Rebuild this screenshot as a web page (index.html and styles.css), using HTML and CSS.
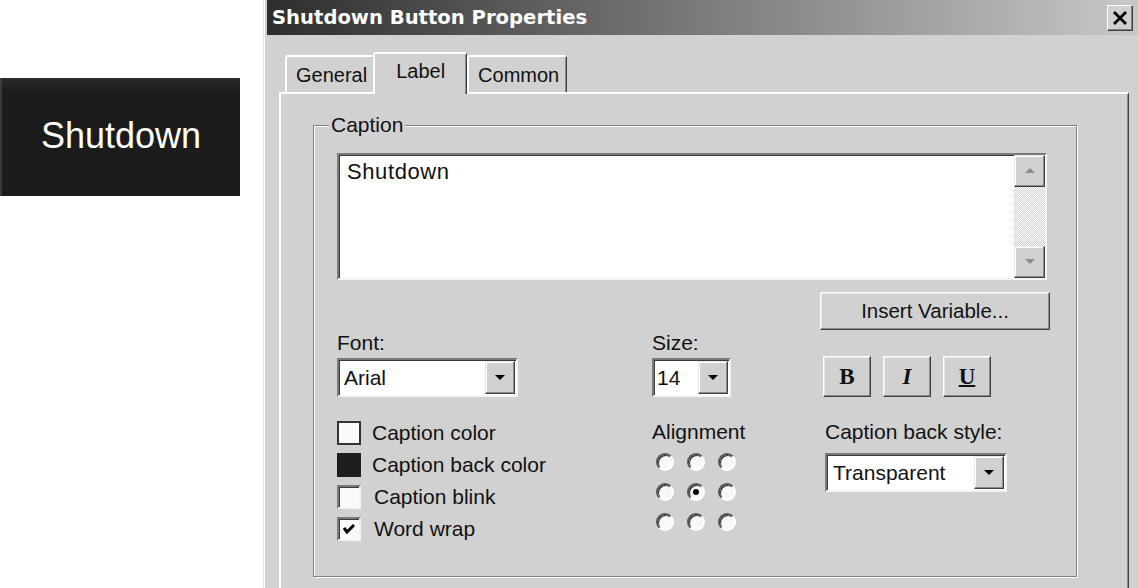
FILE: index.html
```html
<!DOCTYPE html>
<html lang="en">
<head>
    <meta charset="UTF-8">
    <title>Shutdown Button Properties</title>
    <link rel="stylesheet" href="styles.css">
</head>
<body>
    <div class="screen">
        <div class="preview">
            <div class="shutdown-btn">Shutdown</div>
        </div>

        <div class="dialog">
            <div class="titlebar">
                <span class="title">Shutdown Button Properties</span>
                <span class="close-btn">
                    <svg width="16" height="14" viewBox="0 0 16 14"><path d="M2 1 L14 13 M14 1 L2 13" stroke="#000" stroke-width="2.8"/></svg>
                </span>
            </div>

            <div class="tabs">
                <div class="tab">General</div>
                <div class="tab active">Label</div>
                <div class="tab">Common</div>
            </div>

            <div class="tab-panel">
                <fieldset class="group">
                    <legend>Caption</legend>
                    <div class="group-body">
                        <div class="caption-box">
                            <div class="caption-text">Shutdown</div>
                            <div class="vscroll">
                                <span class="scroll-btn">
                                    <svg width="10" height="6" viewBox="0 0 10 6"><path d="M5 0 L10 5 L0 5 Z" fill="#8c8c8c"/></svg>
                                </span>
                                <span class="scroll-track"></span>
                                <span class="scroll-btn">
                                    <svg width="10" height="6" viewBox="0 0 10 6"><path d="M0 0 L10 0 L5 5 Z" fill="#8c8c8c"/></svg>
                                </span>
                            </div>
                        </div>

                        <div class="insert-row">
                            <div class="btn insert-btn">Insert Variable...</div>
                        </div>

                        <div class="fields">
                            <div class="field">
                                <div class="field-label">Font:</div>
                                <div class="combo combo-font">
                                    <span class="combo-value">Arial</span>
                                    <span class="combo-btn"><svg width="10" height="6" viewBox="0 0 10 6"><path d="M0 0 L10 0 L5 5 Z" fill="#000"/></svg></span>
                                </div>
                            </div>
                            <div class="field">
                                <div class="field-label">Size:</div>
                                <div class="combo combo-size">
                                    <span class="combo-value">14</span>
                                    <span class="combo-btn"><svg width="10" height="6" viewBox="0 0 10 6"><path d="M0 0 L10 0 L5 5 Z" fill="#000"/></svg></span>
                                </div>
                            </div>
                            <div class="style-buttons">
                                <div class="btn style-btn bold">B</div>
                                <div class="btn style-btn italic">I</div>
                                <div class="btn style-btn underline">U</div>
                            </div>

                            <div class="check-list">
                                <div class="check-row"><span class="swatch white"></span>Caption color</div>
                                <div class="check-row"><span class="swatch black"></span>Caption back color</div>
                                <div class="check-row"><span class="checkbox"></span>Caption blink</div>
                                <div class="check-row">
                                    <span class="checkbox">
                                        <svg width="14" height="12" viewBox="0 0 14 12"><path d="M2 5 L5 9 L12 2" stroke="#000" stroke-width="3" fill="none"/></svg>
                                    </span>Word wrap
                                </div>
                            </div>
                            <div class="field">
                                <div class="field-label tall">Alignment</div>
                                <div class="radio-grid">
                                    <span class="radio"></span><span class="radio"></span><span class="radio"></span>
                                    <span class="radio"></span><span class="radio checked"></span><span class="radio"></span>
                                    <span class="radio"></span><span class="radio"></span><span class="radio"></span>
                                </div>
                            </div>
                            <div class="field">
                                <div class="field-label tall">Caption back style:</div>
                                <div class="combo combo-back">
                                    <span class="combo-value">Transparent</span>
                                    <span class="combo-btn"><svg width="10" height="6" viewBox="0 0 10 6"><path d="M0 0 L10 0 L5 5 Z" fill="#000"/></svg></span>
                                </div>
                            </div>
                        </div>
                    </div>
                </fieldset>
            </div>
        </div>
    </div>
</body>
</html>
```

FILE: styles.css
```css
* {
    box-sizing: border-box;
}

body {
    margin: 0;
    background-color: #fff;
    font-family: "Liberation Sans", Arial, sans-serif;
    color: #111;
}

.screen {
    display: flex;
    width: 1138px;
    height: 588px;
    overflow: hidden;
}

/* runtime preview of the button */
.preview {
    flex: none;
    width: 263px;
}

.shutdown-btn {
    display: flex;
    align-items: center;
    justify-content: center;
    width: 240px;
    height: 118px;
    margin-top: 78px;
    background: linear-gradient(#2c2c2c, #1c1c1c 12%, #1b1b1b);
    border-left: 2px solid #3a3a3a;
    color: #fff;
    font-size: 36px;
    padding-bottom: 2px;
}

/* dialog window */
.dialog {
    flex: 1;
    display: flex;
    flex-direction: column;
    background-color: #d1d1d1;
    border-left: 1px solid #e4e4e4;
    box-shadow: inset 1px 0 0 #fff;
    padding-left: 3px;
}

.titlebar {
    display: flex;
    align-items: center;
    height: 35px;
    padding: 0 5px 0 5px;
    background: linear-gradient(to right, #2e2e2e, #c8c8c8);
}

.title {
    color: #fff;
    font-family: "DejaVu Sans", sans-serif;
    font-weight: bold;
    font-size: 19.6px;
}

.close-btn {
    display: flex;
    align-items: center;
    justify-content: center;
    width: 26px;
    height: 26px;
    margin-left: auto;
    background-color: #d1d1d1;
    border: 1px solid;
    border-color: #fff #404040 #404040 #fff;
    box-shadow: inset -1px -1px 0 #808080;
}

/* tabs */
.tabs {
    display: flex;
    align-items: flex-end;
    height: 40px;
    margin: 17px 0 0 18px;
    position: relative;
    z-index: 1;
    font-size: 20px;
}

.tab {
    height: 37px;
    padding: 6px 7px 0 9px;
    line-height: 24px;
    background-color: #d1d1d1;
    border-top: 2px solid #fff;
    border-left: 2px solid #fff;
    border-right: 1px solid #404040;
    box-shadow: inset -1px 0 0 #8a8a8a;
    border-radius: 3px 3px 0 0;
}

.tab.active {
    height: 42px;
    margin: 0 0 -2px -2px;
    padding: 5px 21px 0 21px;
}

.tab-panel {
    flex: 1;
    width: 850px;
    margin-left: 12px;
    border-top: 2px solid #fff;
    border-left: 2px solid #fff;
    border-right: 1px solid #404040;
    box-shadow: inset -1px 0 0 #8a8a8a;
}

/* caption group */
.group {
    width: 764px;
    height: 463px;
    margin: 20px 0 0 32px;
    padding: 0;
    min-width: 0;
    border: 1px solid #808080;
    box-shadow: inset 1px 1px 0 #fff, 1px 1px 0 #fff;
    font-size: 21px;
}

.group legend {
    margin-left: 15px;
    padding: 0 2px;
    line-height: 22px;
    background-color: #d1d1d1;
}

.group-body {
    padding: 17px 0 0 23px;
}

.caption-box {
    display: flex;
    width: 710px;
    height: 127px;
    background-color: #fff;
    border: 2px solid;
    border-color: #7a7a7a #f4f4f4 #f4f4f4 #7a7a7a;
    box-shadow: inset 1px 1px 0 #3a3a3a;
}

.caption-text {
    flex: 1;
    padding: 4px 0 0 8px;
    font-size: 22px;
    letter-spacing: 0.6px;
    line-height: 26px;
}

.vscroll {
    display: flex;
    flex-direction: column;
    width: 31px;
}

.scroll-btn {
    display: flex;
    align-items: center;
    justify-content: center;
    height: 32px;
    background-color: #d1d1d1;
    border: 1px solid;
    border-color: #e8e8e8 #404040 #404040 #e8e8e8;
    box-shadow: inset -1px -1px 0 #8a8a8a, inset 1px 1px 0 #fff;
}

.scroll-track {
    flex: 1;
    background: repeating-conic-gradient(#fff 0 25%, #cfcfcf 0 50%) 0 0 / 2px 2px;
}

.btn {
    background-color: #d1d1d1;
    border: 1px solid;
    border-color: #fff #404040 #404040 #fff;
    box-shadow: inset -1px -1px 0 #8a8a8a, inset 1px 1px 0 #e8e8e8;
}

.insert-row {
    display: flex;
    justify-content: flex-end;
    width: 713px;
    margin-top: 12px;
}

.insert-btn {
    width: 230px;
    height: 38px;
    line-height: 36px;
    text-align: center;
    font-size: 20.5px;
}

/* option fields */
.fields {
    display: grid;
    grid-template-columns: 315px 173px 1fr;
    row-gap: 20px;
    margin-top: 1px;
    font-size: 21px;
}

.field-label {
    line-height: 24px;
    margin-bottom: 3px;
}

.field-label.tall {
    line-height: 30px;
    margin-bottom: 0;
}

.combo {
    display: flex;
    height: 39px;
    background-color: #fff;
    border: 2px solid;
    border-color: #7a7a7a #f4f4f4 #f4f4f4 #7a7a7a;
    box-shadow: inset 1px 1px 0 #3a3a3a;
}

.combo-font { width: 181px; }
.combo-size { width: 79px; }
.combo-back { width: 182px; margin-top: 6px; }

.combo-value {
    flex: 1;
    padding-left: 5px;
    line-height: 35px;
}

.combo-size .combo-value {
    padding-left: 3px;
}

.combo-back .combo-value {
    padding-left: 6px;
}

.combo-btn {
    display: flex;
    align-items: center;
    justify-content: center;
    width: 30px;
    margin: 1px 1px 1px 0;
    background-color: #d1d1d1;
    border: 1px solid;
    border-color: #e8e8e8 #404040 #404040 #e8e8e8;
    box-shadow: inset -1px -1px 0 #8a8a8a, inset 1px 1px 0 #fff;
}

.style-buttons {
    display: flex;
    gap: 12px;
    align-self: end;
    margin-left: -2px;
}

.style-btn {
    width: 48px;
    height: 41px;
    line-height: 39px;
    text-align: center;
    font-family: "Liberation Serif", serif;
    font-weight: bold;
    font-size: 23px;
}

.style-btn.italic {
    font-style: italic;
}

.style-btn.underline {
    text-decoration: underline;
    text-decoration-thickness: 2px;
}

.check-row {
    display: flex;
    align-items: center;
    gap: 11px;
    height: 32px;
}

.swatch,
.checkbox {
    display: flex;
    align-items: center;
    justify-content: center;
    flex: none;
    width: 24px;
    height: 24px;
}

.swatch.white {
    background-color: #fafafa;
    border: 2px solid #333;
}

.swatch.black {
    background-color: #1e1e1e;
}

.checkbox {
    background-color: #fafafa;
    border: 2px solid;
    border-color: #7a7a7a #f4f4f4 #f4f4f4 #7a7a7a;
    box-shadow: inset 1px 1px 0 #3a3a3a;
    margin-right: 2px;
}

.radio-grid {
    display: grid;
    grid-template-columns: repeat(3, 31px);
    grid-auto-rows: 30px;
    margin-left: -3px;
}

.radio {
    position: relative;
    justify-self: center;
    align-self: center;
    width: 18px;
    height: 18px;
    border-radius: 50%;
    background-color: #f8f8f8;
    border: 2px solid;
    border-color: #555 #fff #fff #555;
    box-shadow: inset 1px 1px 0 #2a2a2a;
}

.radio.checked::after {
    content: "";
    position: absolute;
    left: 4px;
    top: 4px;
    width: 6px;
    height: 6px;
    border-radius: 50%;
    background-color: #000;
}
```
